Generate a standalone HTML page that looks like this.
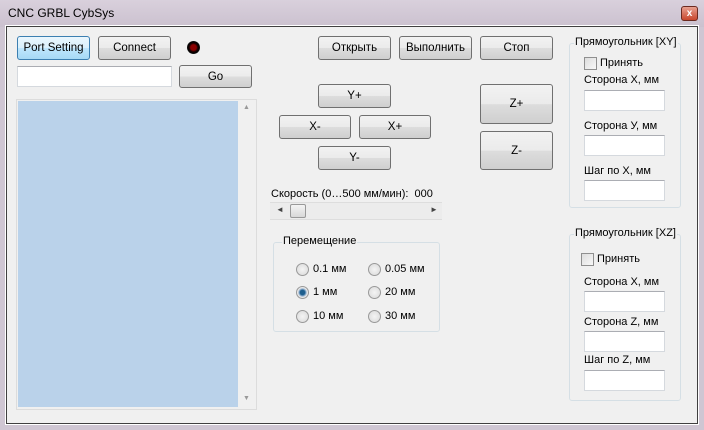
<!DOCTYPE html><html><head><meta charset="utf-8"><style>
*{box-sizing:border-box;margin:0;padding:0}
body{width:704px;height:430px;background:#cfc6d3;font-family:"Liberation Sans","DejaVu Sans",sans-serif;font-size:11px;color:#000;position:relative;overflow:hidden}
.a{position:absolute}
.title{left:0;top:0;width:704px;height:27px;background:linear-gradient(#d9d0dc,#cbc1cf)}
.client{left:6px;top:26px;width:692px;height:398px;background:#f0f0f0;border:1px solid #404040;outline:1px solid #fff}
.btn{position:absolute;border:1px solid #707070;border-radius:3px;background:linear-gradient(#f2f2f2 0%,#ebebeb 50%,#dddddd 51%,#cfcfcf 100%);text-align:center;font-size:11.5px;display:flex;align-items:center;justify-content:center}
.tb{position:absolute;background:#fff;border:1px solid #d5d9de;border-top-color:#abadb3}
.grp{position:absolute;border:1px solid #d5dfe5;border-radius:3px}
.gl{position:absolute;background:#f0f0f0;padding:0 1px;font-size:11px;top:-8px;left:8px}
.rad{position:absolute;width:13px;height:13px;border-radius:50%;border:1px solid #999;background:radial-gradient(#f4f4f4,#d8d8d8)}
.rl{position:absolute;font-size:11px}
.cb{position:absolute;width:13px;height:13px;border:1px solid #8f8f8f;background:linear-gradient(135deg,#ddd,#f8f8f8)}
</style></head><body>
<div class="a title"></div>
<div class="a" style="left:8px;top:6px;font-size:12px">CNC GRBL CybSys</div>
<div class="a" style="left:681px;top:6px;width:17px;height:15px;border:1px solid #6b2a20;border-radius:3px;background:linear-gradient(#e8a090,#c8452c);color:#fff;font-size:10px;font-weight:bold;text-align:center;line-height:13px">x</div>
<div class="a client"></div>

<div class="btn" style="left:17px;top:36px;width:73px;height:24px;border-color:#3c7fb1;background:linear-gradient(#eaf6fd,#d9f0fc 50%,#bee6fd 51%,#a7d9f5)">Port Setting</div>
<div class="btn" style="left:98px;top:36px;width:73px;height:24px">Connect</div>
<div class="a" style="left:187px;top:41px;width:13px;height:13px;border-radius:50%;background:radial-gradient(#8a0000 30%,#200000 45%,#000 60%,#555 100%)"></div>
<div class="tb" style="left:17px;top:66px;width:155px;height:21px"></div>
<div class="btn" style="left:179px;top:65px;width:73px;height:23px">Go</div>

<div class="a" style="left:16px;top:99px;width:241px;height:311px;border:1px solid #dcdcdc;background:#f0f0f0"></div>
<div class="a" style="left:18px;top:101px;width:220px;height:306px;background:#bad2ea"></div>
<div class="a" style="left:243px;top:104px;color:#999;font-size:7px">▲</div>
<div class="a" style="left:243px;top:395px;color:#999;font-size:7px">▼</div>

<div class="btn" style="left:318px;top:36px;width:73px;height:24px">Открыть</div>
<div class="btn" style="left:399px;top:36px;width:73px;height:24px">Выполнить</div>
<div class="btn" style="left:480px;top:36px;width:73px;height:24px">Стоп</div>
<div class="btn" style="left:318px;top:84px;width:73px;height:24px">Y+</div>
<div class="btn" style="left:279px;top:115px;width:72px;height:24px">X-</div>
<div class="btn" style="left:359px;top:115px;width:72px;height:24px">X+</div>
<div class="btn" style="left:318px;top:146px;width:73px;height:24px">Y-</div>
<div class="btn" style="left:480px;top:84px;width:73px;height:40px">Z+</div>
<div class="btn" style="left:480px;top:131px;width:73px;height:39px">Z-</div>

<div class="a" style="left:271px;top:188px;font-size:11px">Скорость (0…500 мм/мин):&nbsp; 000</div>
<div class="a" style="left:270px;top:202px;width:172px;height:18px;background:#ececec;border-top:1px solid #ddd;border-bottom:1px solid #ddd"></div>
<div class="a" style="left:276px;top:205px;font-size:8px;color:#444">◄</div>
<div class="a" style="left:430px;top:205px;font-size:8px;color:#444">►</div>
<div class="a" style="left:290px;top:204px;width:16px;height:14px;border:1px solid #999;border-radius:2px;background:linear-gradient(#f4f4f4,#d8d8d8)"></div>

<div class="grp" style="left:273px;top:242px;width:167px;height:90px"><div class="gl">Перемещение</div></div>
<div class="rad" style="left:296px;top:263px"></div><div class="rl" style="left:313px;top:263px">0.1 мм</div>
<div class="rad" style="left:368px;top:263px"></div><div class="rl" style="left:385px;top:263px">0.05 мм</div>
<div class="rad" style="left:296px;top:286px;background:radial-gradient(#1e5f8e 30%,#8ac 45%,#e8e8e8 60%)"></div><div class="rl" style="left:313px;top:286px">1 мм</div>
<div class="rad" style="left:368px;top:286px"></div><div class="rl" style="left:385px;top:286px">20 мм</div>
<div class="rad" style="left:296px;top:310px"></div><div class="rl" style="left:313px;top:310px">10 мм</div>
<div class="rad" style="left:368px;top:310px"></div><div class="rl" style="left:385px;top:310px">30 мм</div>

<div class="grp" style="left:569px;top:43px;width:112px;height:165px"><div class="gl" style="left:4px">Прямоугольник [XY]</div></div>
<div class="cb" style="left:584px;top:57px"></div><div class="rl" style="left:600px;top:57px">Принять</div>
<div class="rl" style="left:584px;top:74px">Сторона X, мм</div>
<div class="tb" style="left:584px;top:90px;width:81px;height:21px"></div>
<div class="rl" style="left:584px;top:120px">Сторона У, мм</div>
<div class="tb" style="left:584px;top:135px;width:81px;height:21px"></div>
<div class="rl" style="left:584px;top:165px">Шаг по X, мм</div>
<div class="tb" style="left:584px;top:180px;width:81px;height:21px"></div>

<div class="grp" style="left:569px;top:234px;width:112px;height:167px"><div class="gl" style="left:4px">Прямоугольник [XZ]</div></div>
<div class="cb" style="left:581px;top:253px"></div><div class="rl" style="left:597px;top:253px">Принять</div>
<div class="rl" style="left:584px;top:276px">Сторона X, мм</div>
<div class="tb" style="left:584px;top:291px;width:81px;height:21px"></div>
<div class="rl" style="left:584px;top:316px">Сторона Z, мм</div>
<div class="tb" style="left:584px;top:331px;width:81px;height:21px"></div>
<div class="rl" style="left:584px;top:354px">Шаг по Z, мм</div>
<div class="tb" style="left:584px;top:370px;width:81px;height:21px"></div>
</body></html>
